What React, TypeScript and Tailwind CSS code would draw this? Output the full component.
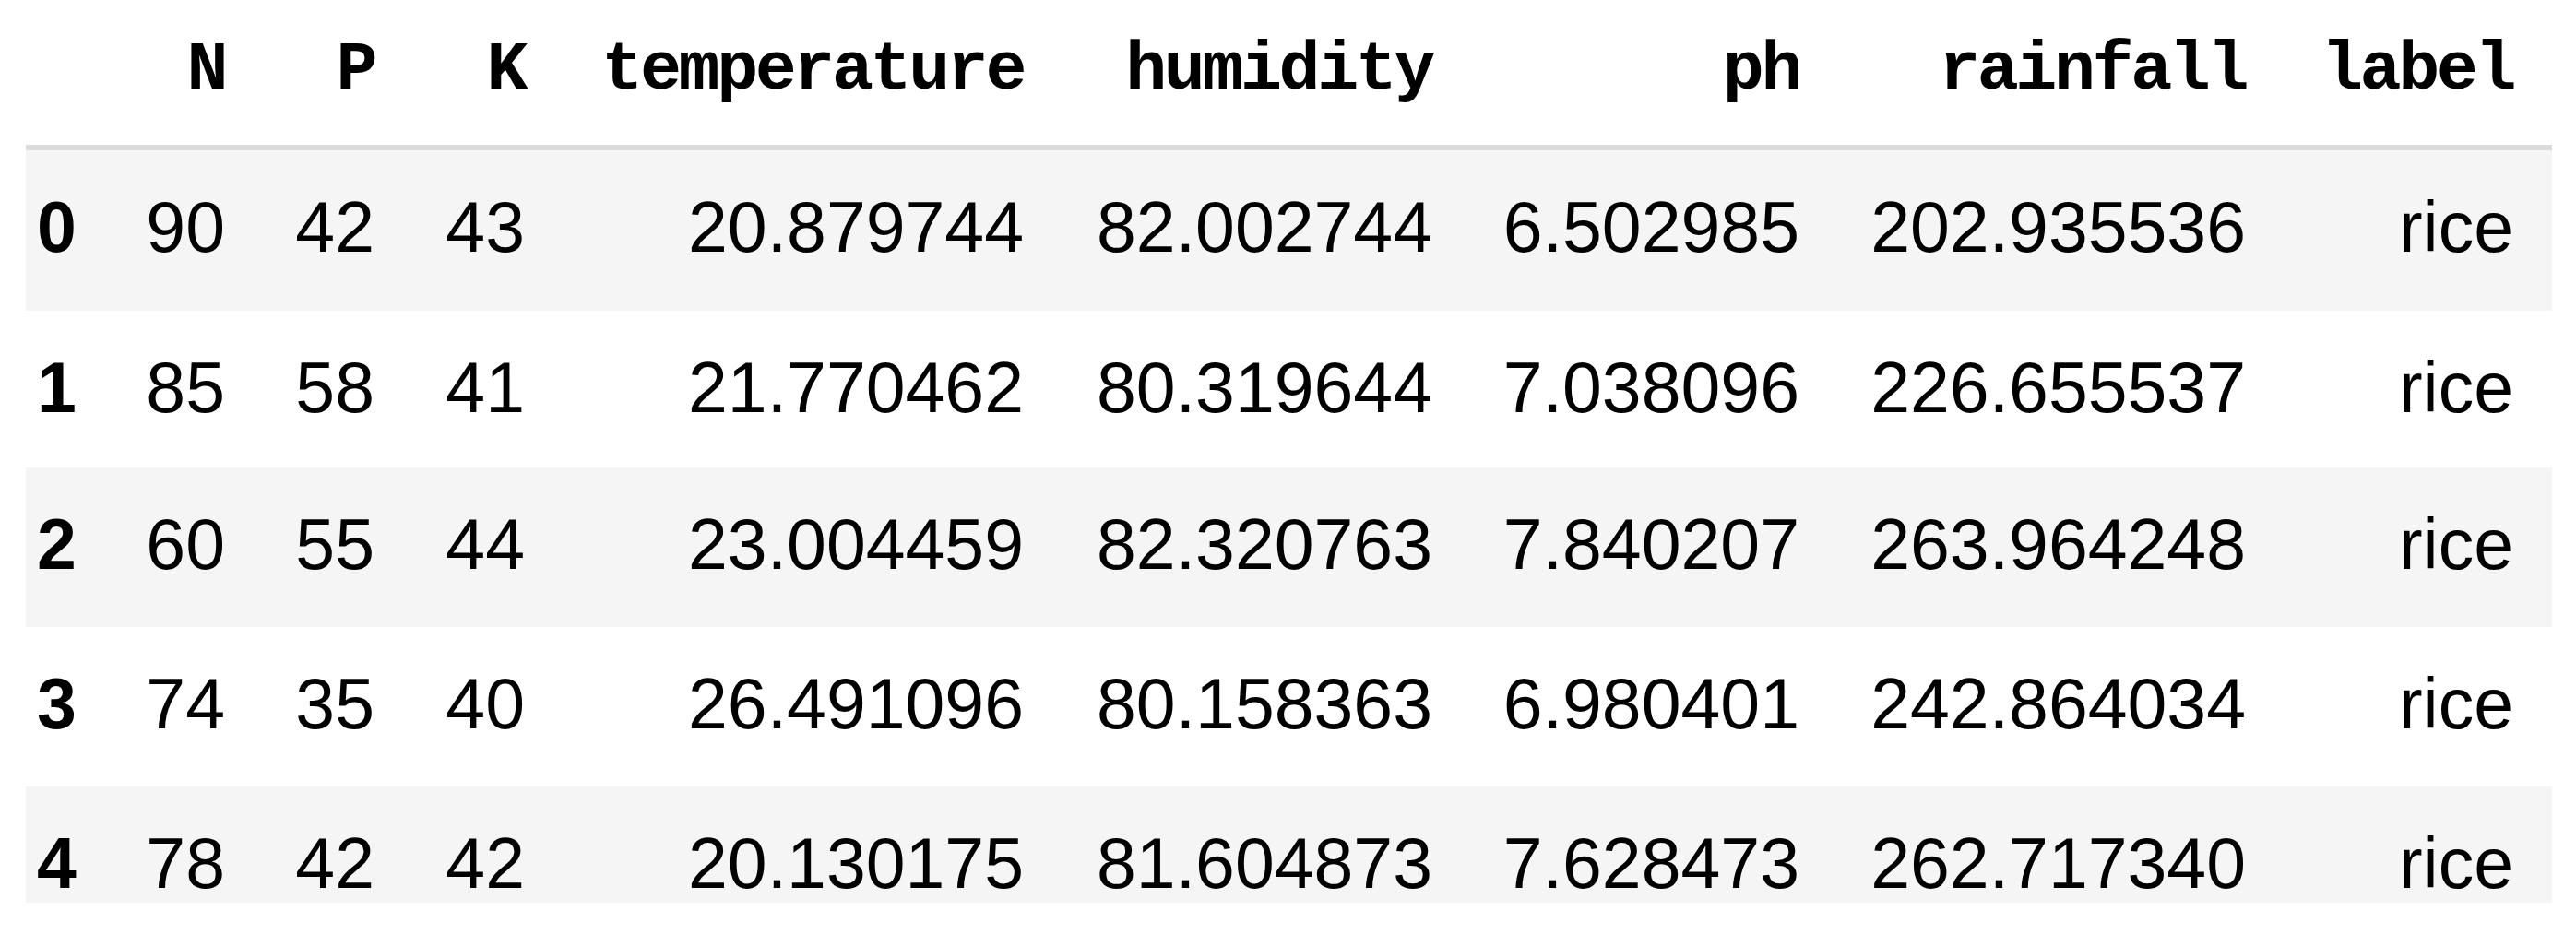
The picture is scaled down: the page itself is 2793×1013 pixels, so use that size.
import clsx from 'clsx'

type Row = {
  idx: number
  N: number
  P: number
  K: number
  temperature: string
  humidity: string
  ph: string
  rainfall: string
  label: string
}

const rows: Row[] = [
  { idx: 0, N: 90, P: 42, K: 43, temperature: '20.879744', humidity: '82.002744', ph: '6.502985', rainfall: '202.935536', label: 'rice' },
  { idx: 1, N: 85, P: 58, K: 41, temperature: '21.770462', humidity: '80.319644', ph: '7.038096', rainfall: '226.655537', label: 'rice' },
  { idx: 2, N: 60, P: 55, K: 44, temperature: '23.004459', humidity: '82.320763', ph: '7.840207', rainfall: '263.964248', label: 'rice' },
  { idx: 3, N: 74, P: 35, K: 40, temperature: '26.491096', humidity: '80.158363', ph: '6.980401', rainfall: '242.864034', label: 'rice' },
  { idx: 4, N: 78, P: 42, K: 42, temperature: '20.130175', humidity: '81.604873', ph: '7.628473', rainfall: '262.717340', label: 'rice' },
]

const columns = ['N', 'P', 'K', 'temperature', 'humidity', 'ph', 'rainfall', 'label'] as const

// fixed column widths so the right-aligned text lands where the frame has it
const grid = 'grid grid-cols-[93px_165px_162px_163px_541px_443px_398px_484px_290px]'

// row heights as measured (last row is cut off by the frame)
const rowHeights = ['h-[174px]', 'h-[170px]', 'h-[173px]', 'h-[173px]', 'h-[126px]']

export default function App() {
  return (
    <div className="w-[2793px] h-[1013px] bg-white overflow-hidden pl-[28px]">
      <div className="w-[2739px] text-black">
        {/* header */}
        <div className={clsx(grid, 'h-[163px] border-b-[6px] border-[#dcdcdc] font-["Liberation_Mono",monospace] font-bold text-[75px] leading-none tracking-[-3.4px]')}>
          <div />
          {columns.map(c => (
            <div key={c} className="text-right pr-[42px] pt-[39px]">{c}</div>
          ))}
        </div>

        {/* body */}
        {rows.map((r, i) => (
          <div
            key={r.idx}
            className={clsx(grid, rowHeights[i], i % 2 === 0 ? 'bg-[#f5f5f5]' : 'bg-white', 'font-["Liberation_Sans",Arial,sans-serif] text-[77px] leading-none')}
          >
            <div className="pl-[12px] pt-[45px] font-bold">{r.idx}</div>
            {columns.map(c => (
              <div key={c} className="text-right pr-[42px] pt-[45px]">{r[c]}</div>
            ))}
          </div>
        ))}
      </div>
    </div>
  )
}
